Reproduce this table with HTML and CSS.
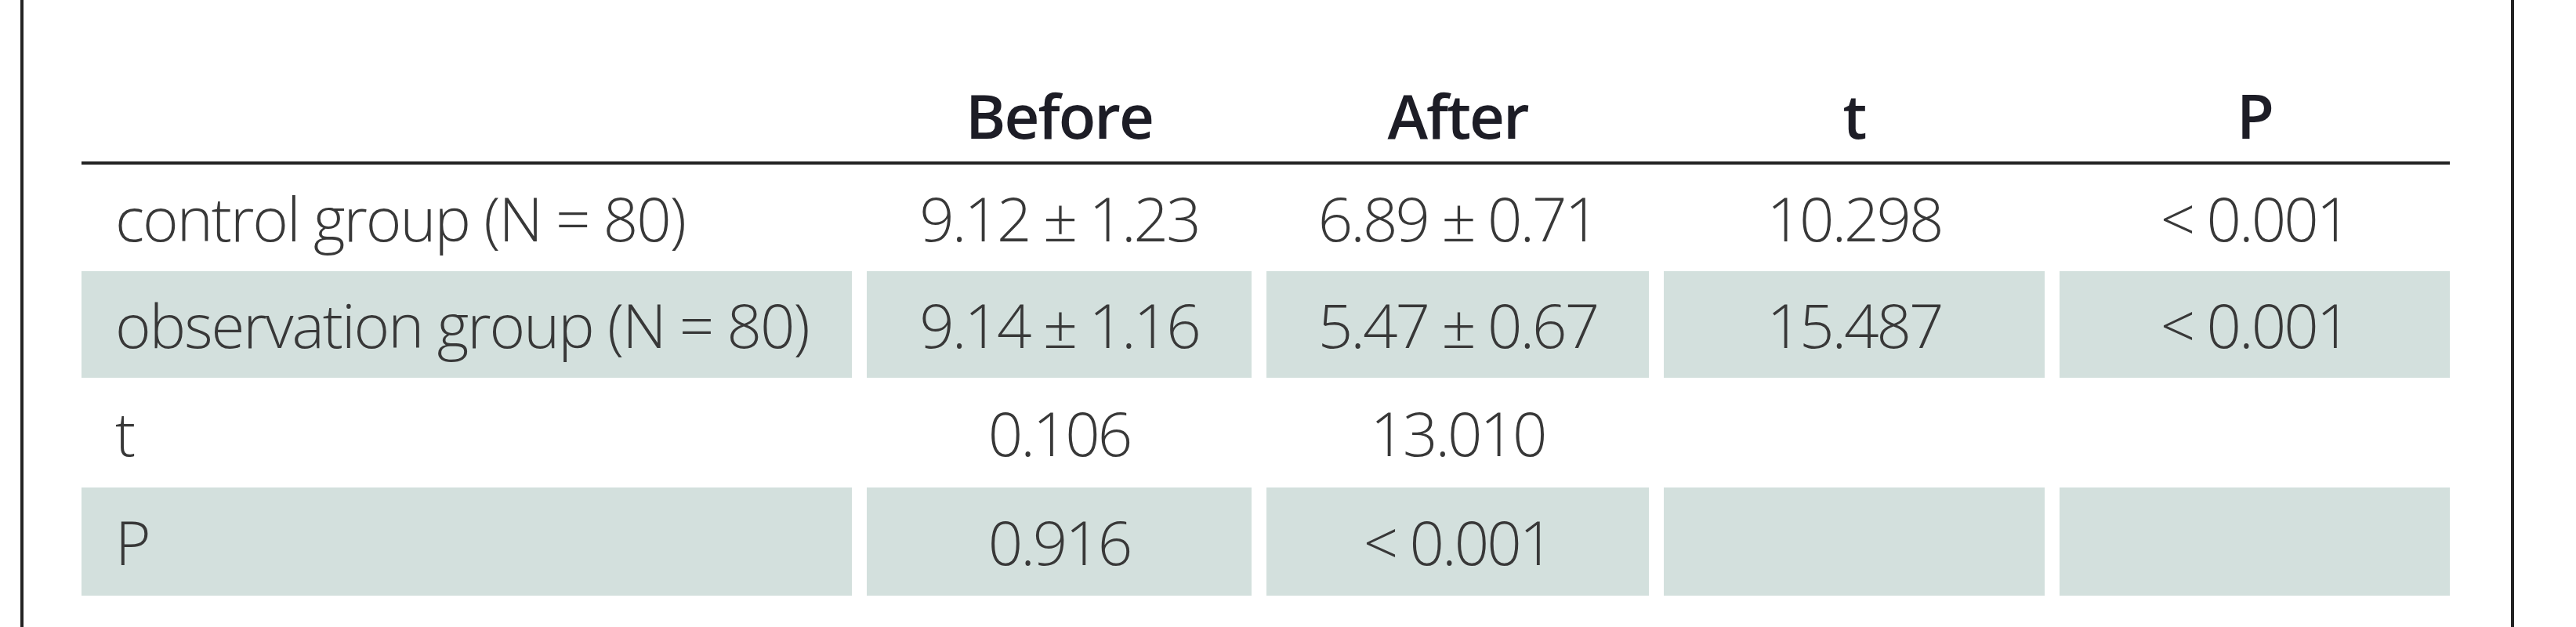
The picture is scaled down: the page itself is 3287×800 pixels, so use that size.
FILE: index.html
```html
<!DOCTYPE html>
<html lang="en">
<head>
<meta charset="utf-8">
<title>Table</title>
<link rel="stylesheet" href="styles.css">
</head>
<body>
<div class="frame">
  <div class="table">
    <div class="th"></div>
    <div class="th">Before</div>
    <div class="th">After</div>
    <div class="th">t</div>
    <div class="th">P</div>
    <div class="rule"></div>

    <div class="td label">control group (N = 80)</div>
    <div class="td">9.12 ± 1.23</div>
    <div class="td">6.89 ± 0.71</div>
    <div class="td">10.298</div>
    <div class="td">&lt; 0.001</div>

    <div class="td label shade">observation group (N = 80)</div>
    <div class="td shade">9.14 ± 1.16</div>
    <div class="td shade">5.47 ± 0.67</div>
    <div class="td shade">15.487</div>
    <div class="td shade">&lt; 0.001</div>

    <div class="td label">t</div>
    <div class="td">0.106</div>
    <div class="td">13.010</div>
    <div class="td"></div>
    <div class="td"></div>

    <div class="td label shade">P</div>
    <div class="td shade">0.916</div>
    <div class="td shade">&lt; 0.001</div>
    <div class="td shade"></div>
    <div class="td shade"></div>
  </div>
</div>
</body>
</html>
```
FILE: styles.css
```css
html, body {
  margin: 0;
  padding: 0;
  background: #ffffff;
}

body {
  font-family: "Open Sans", "Noto Sans", sans-serif;
}

.frame {
  box-sizing: border-box;
  margin-left: 26px;
  width: 3182px;
  height: 800px;
  border-left: 4px solid #232323;
  border-right: 4px solid #232323;
  padding: 0 78px 0 74px;
}

.table {
  display: grid;
  grid-template-columns: 983px 491px 488px 486px 498px;
  grid-template-rows: 206px 4px 136px 136px 140px 138px;
  column-gap: 19px;
  row-gap: 0;
}

.th {
  display: flex;
  align-items: flex-end;
  justify-content: center;
  padding-bottom: 20px;
  font-size: 78px;
  line-height: 78px;
  font-weight: 560;
  letter-spacing: -2px;
  color: #1d1d26;
}

.rule {
  grid-column: 1 / -1;
  background: #232323;
}

.td {
  display: flex;
  align-items: center;
  justify-content: center;
  font-size: 78px;
  line-height: 78px;
  font-weight: 300;
  letter-spacing: -3px;
  color: #383838;
  white-space: nowrap;
}

.td.label {
  justify-content: flex-start;
  padding-left: 43px;
  letter-spacing: -2px;
}

.shade {
  background: #d3e0dd;
}
```
